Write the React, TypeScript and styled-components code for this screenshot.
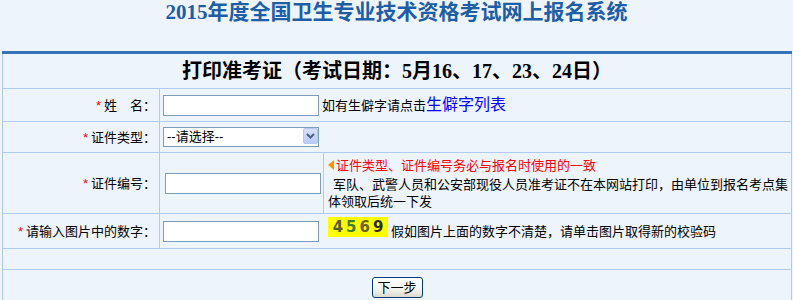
import React from 'react';
import styled, { createGlobalStyle } from 'styled-components';

const GlobalStyle = createGlobalStyle`
	body {
		margin: 0;
		background-color: #eef4fc;
		font-family: "Liberation Sans", "Noto Sans CJK SC", sans-serif;
		font-size: 13px;
		color: #000;
	}
`;

const Title = styled.h1`
	margin: 0;
	height: 51px;
	font: bold 21px/24px "Liberation Serif", "Noto Sans CJK SC", serif;
	color: #1d5ea6;
	text-align: center;
`;

const Form = styled.table`
	margin-left: 2px;
	width: 790px;
	border-collapse: collapse;
	border-top: 3px solid #3574b8;
	border-left: 1px solid #aecbf0;
	border-right: 1px solid #aecbf0;
`;

const Row = styled.tr<{ h: number }>`
	height: ${({ h }) => `${h}px`};
`;

const HeadCell = styled.th`
	padding: 0;
	border-bottom: 1px solid #aecbf0;
	font: bold 20px/24px "Liberation Serif", "Noto Sans CJK SC", serif;
	color: #000;
	text-align: center;
	vertical-align: middle;
`;

const Cell = styled.td<{ pad?: number }>`
	padding: 0 0 0 ${({ pad }) => `${pad ?? 3}px`};
	border: 1px solid #aecbf0;
	line-height: 17px;
	vertical-align: middle;
`;

const LabelCell = styled(Cell)`
	padding: 0 3px 0 0;
	text-align: right;
	white-space: nowrap;
`;

const Req = styled.span`
	color: #f00;
	margin-right: 3px;
`;

const Input = styled.input`
	box-sizing: border-box;
	width: 156px;
	height: 21px;
	margin: 0;
	padding: 1px 3px;
	border: 1px solid #7f9db9;
	background: #fff;
	font: 13px "Liberation Sans", "Noto Sans CJK SC", sans-serif;
	vertical-align: middle;
`;

const SelectWrap = styled.span`
	position: relative;
	display: inline-block;
	vertical-align: middle;
`;

const Select = styled.select`
	box-sizing: border-box;
	width: 156px;
	height: 20px;
	margin: 0;
	padding: 0 0 0 3px;
	border: 1px solid #7f9db9;
	background: #fff;
	appearance: none;
	font: 13px/18px "Liberation Sans", "Noto Sans CJK SC", sans-serif;
	color: #000;
	display: block;
`;

const Arrow = styled.span`
	position: absolute;
	top: 1px;
	right: 1px;
	width: 15px;
	height: 16px;
	box-sizing: border-box;
	border: 1px solid #b7c9f2;
	border-radius: 2px;
	background: linear-gradient(#d6e1fb, #b9cbf5);
	display: flex;
	align-items: center;
	justify-content: center;
	pointer-events: none;
`;

const Note = styled.span`
	margin-left: 3px;
	vertical-align: middle;
`;

const Link = styled.a`
	color: #00f;
	font-size: 16px;
	text-decoration: none;
`;

const Warn = styled.div`
	color: #f00;
	display: flex;
	align-items: center;
	margin-bottom: 2px;
`;

const Info = styled.div`
	text-indent: 5px;
`;

const Captcha = styled.span`
	display: inline-flex;
	align-items: center;
	justify-content: center;
	box-sizing: border-box;
	width: 60px;
	height: 20px;
	margin-left: 9px;
	padding-left: 3px;
	background: #ff0;
	font: 600 15px/20px "DejaVu Sans", sans-serif;
	letter-spacing: 3px;
	vertical-align: middle;
	position: relative;
	top: -4px;
`;

const Digit = styled.span<{ c: string }>`
	color: ${({ c }) => c};
`;

const ButtonCell = styled.td`
	padding: 7px 0 0;
	border: 1px solid #aecbf0;
	text-align: center;
	vertical-align: top;
`;

const Button = styled.button`
	width: 51px;
	height: 21px;
	padding: 0;
	border: 1px solid #003c74;
	border-radius: 3px;
	background: linear-gradient(#fff, #f3f3ee 60%, #dcdad0);
	font: 13px/17px "Liberation Sans", "Noto Sans CJK SC", sans-serif;
	color: #000;
`;

const digits = [
	{ d: '4', c: '#5a5a2a' },
	{ d: '5', c: '#3f7d2e' },
	{ d: '6', c: '#6d5c1c' },
	{ d: '9', c: '#2c2c24' },
];

export default function App() {
	return (
		<>
			<GlobalStyle />
			<Title>2015年度全国卫生专业技术资格考试网上报名系统</Title>
			<Form>
				<colgroup>
					<col style={{ width: 157 }} />
					<col style={{ width: 164 }} />
					<col />
				</colgroup>
				<tbody>
					<Row h={36}>
						<HeadCell colSpan={3}>打印准考证（考试日期：5月16、17、23、24日）</HeadCell>
					</Row>
					<Row h={33}>
						<LabelCell><Req>*</Req>姓　名：</LabelCell>
						<Cell colSpan={2}>
							<Input type="text" />
							<Note>如有生僻字请点击<Link href="#">生僻字列表</Link></Note>
						</Cell>
					</Row>
					<Row h={31}>
						<LabelCell><Req>*</Req>证件类型：</LabelCell>
						<Cell colSpan={2}>
							<SelectWrap>
								<Select defaultValue="">
									<option value="">--请选择--</option>
								</Select>
								<Arrow>
									<svg width="9" height="6" viewBox="0 0 9 6">
										<path d="M1 1 L4.5 4.5 L8 1" fill="none" stroke="#4d6185" strokeWidth="2" />
									</svg>
								</Arrow>
							</SelectWrap>
						</Cell>
					</Row>
					<Row h={61}>
						<LabelCell><Req>*</Req>证件编号：</LabelCell>
						<Cell pad={5}>
							<Input type="text" />
						</Cell>
						<Cell pad={4}>
							<Warn>
								<svg width="6" height="10" viewBox="0 0 6 10" style={{ marginRight: 2 }}>
									<path d="M6 0 L0 5 L6 10 Z" fill="#f39800" />
								</svg>
								证件类型、证件编号务必与报名时使用的一致
							</Warn>
							<Info>军队、武警人员和公安部现役人员准考证不在本网站打印，由单位到报名考点集体领取后统一下发</Info>
						</Cell>
					</Row>
					<Row h={35}>
						<LabelCell><Req>*</Req>请输入图片中的数字：</LabelCell>
						<Cell colSpan={2}>
							<Input type="text" />
							<Captcha>
								{digits.map(({ d, c }) => (
									<Digit key={d} c={c}>{d}</Digit>
								))}
							</Captcha>
							<Note>假如图片上面的数字不清楚，请单击图片取得新的校验码</Note>
						</Cell>
					</Row>
					<Row h={21}>
						<Cell colSpan={3} />
					</Row>
					<Row h={40}>
						<ButtonCell colSpan={3}>
							<Button type="button">下一步</Button>
						</ButtonCell>
					</Row>
				</tbody>
			</Form>
		</>
	);
}
